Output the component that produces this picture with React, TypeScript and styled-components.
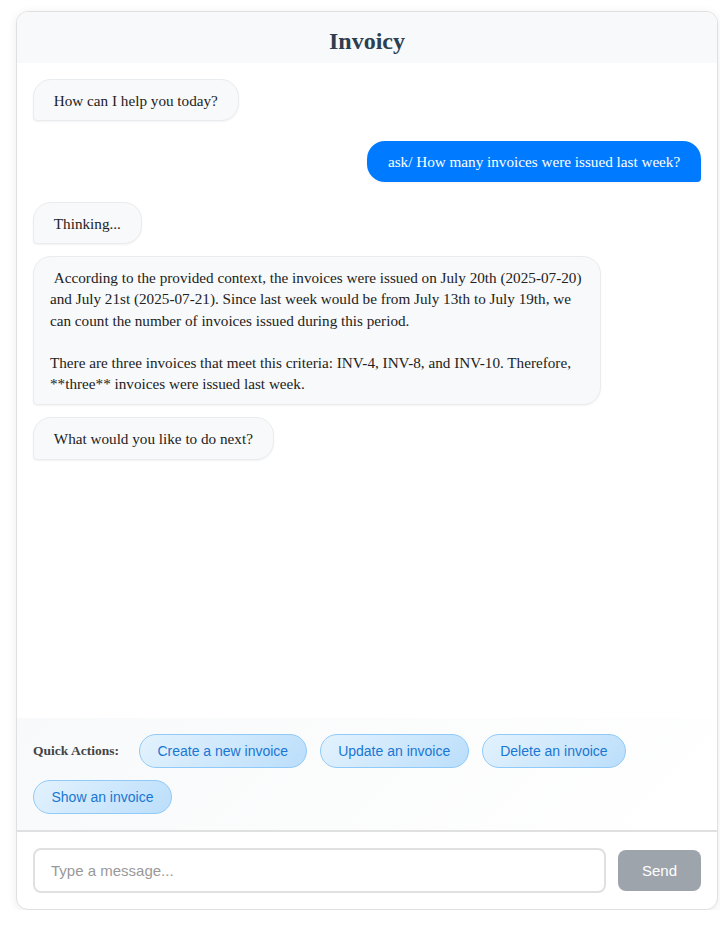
import styled, { createGlobalStyle } from "styled-components";

// ─── Data ─────────────────────────────────────────────────────────────────────

type Message = { id: number; from: "bot" | "user"; text: string };

const MESSAGES: Message[] = [
  { id: 1, from: "bot", text: " How can I help you today? " },
  { id: 2, from: "user", text: " ask/ How many invoices were issued last week? " },
  { id: 3, from: "bot", text: " Thinking... " },
  {
    id: 4,
    from: "bot",
    text:
      " According to the provided context, the invoices were issued on July 20th (2025-07-20) and July 21st (2025-07-21). Since last week would be from July 13th to July 19th, we can count the number of invoices issued during this period.\n\nThere are three invoices that meet this criteria: INV-4, INV-8, and INV-10. Therefore, **three** invoices were issued last week.",
  },
  { id: 5, from: "bot", text: " What would you like to do next? " },
];

const QUICK_ACTIONS = [
  "Create a new invoice",
  "Update an invoice",
  "Delete an invoice",
  "Show an invoice",
];

// ─── Styled ───────────────────────────────────────────────────────────────────

const GlobalStyle = createGlobalStyle`
  * { box-sizing: border-box; }
  body { margin: 0; background: #fff; font-family: "Liberation Serif", "Times New Roman", serif; }
`;

const Page = styled.div`
  padding: 11px 2px 0 16px;
`;

const Card = styled.div`
  height: 899px;
  display: flex;
  flex-direction: column;
  background: #fff;
  border: 1px solid #e0e0e0;
  border-radius: 12px;
  box-shadow: 0 2px 10px rgba(0, 0, 0, 0.08);
  overflow: hidden;
`;

const Header = styled.header`
  background: #f8f9fa;
  padding: 16px 0 8px;
  text-align: center;
`;

const Title = styled.h1`
  margin: 0;
  font-size: 24px;
  line-height: 27px;
  font-weight: 700;
  color: #2c3e50;
`;

const MessageList = styled.div`
  flex: 1;
  padding: 16px;
  display: flex;
  flex-direction: column;
  gap: 12px;
  overflow-y: auto;
`;

const Row = styled.div<{ $user: boolean }>`
  display: flex;
  justify-content: ${({ $user }) => ($user ? "flex-end" : "flex-start")};
  margin: ${({ $user }) => ($user ? "8px 0" : "0")};
`;

const Bubble = styled.div<{ $user: boolean }>`
  max-width: 85%;
  padding: ${({ $user }) => ($user ? "9.6px 17px" : "9.6px 16px")};
  font-size: 15.2px;
  line-height: 1.4;
  white-space: pre-wrap;
  border-radius: ${({ $user }) => ($user ? "18px 18px 4px 18px" : "18px 18px 18px 4px")};
  background: ${({ $user }) => ($user ? "#007bff" : "#f8f9fa")};
  color: ${({ $user }) => ($user ? "#fff" : "#222")};
  border: ${({ $user }) => ($user ? "none" : "1px solid #e9ecef")};
  box-shadow: 0 1px 2px rgba(0, 0, 0, 0.05);
`;

const QuickBar = styled.div`
  display: flex;
  flex-wrap: wrap;
  align-items: center;
  column-gap: 13px;
  row-gap: 12px;
  padding: 16px;
  background: linear-gradient(135deg, #f8f9fa 0%, #ffffff 100%);
`;

const QuickLabel = styled.span`
  font-size: 13.5px;
  font-weight: 700;
  color: #444;
  margin-right: 7px;
`;

const Chip = styled.button`
  font-family: "Liberation Sans", Arial, sans-serif;
  font-size: 14px;
  line-height: 16px;
  padding: 8px 17.5px;
  border-radius: 20px;
  border: 1px solid #90caf9;
  background: linear-gradient(135deg, #e3f2fd 0%, #bbdefb 100%);
  color: #1976d2;
  cursor: pointer;
`;

const InputBar = styled.div`
  display: flex;
  align-items: center;
  gap: 12px;
  padding: 16px;
  border-top: 2px solid #e0e0e0;
`;

const TextInput = styled.input`
  flex: 1;
  height: 45px;
  padding: 12px 16px;
  font-family: "Liberation Sans", Arial, sans-serif;
  font-size: 15px;
  color: #333;
  border: 2px solid #e0e0e0;
  border-radius: 8px;
  outline: none;
  &::placeholder { color: #999; }
`;

const SendButton = styled.button`
  padding: 12px 24px;
  font-family: "Liberation Sans", Arial, sans-serif;
  font-size: 15px;
  line-height: 17px;
  color: #fff;
  background: #9ea4ab;
  border: none;
  border-radius: 8px;
`;

// ─── Component ────────────────────────────────────────────────────────────────

export default function App() {
  return (
    <Page>
      <GlobalStyle />
      <Card>
        <Header>
          <Title>Invoicy</Title>
        </Header>

        <MessageList>
          {MESSAGES.map((m) => (
            <Row key={m.id} $user={m.from === "user"}>
              <Bubble $user={m.from === "user"}>{m.text}</Bubble>
            </Row>
          ))}
        </MessageList>

        <QuickBar>
          <QuickLabel>Quick Actions:</QuickLabel>
          {QUICK_ACTIONS.map((a) => (
            <Chip key={a}>{a}</Chip>
          ))}
        </QuickBar>

        <InputBar>
          <TextInput placeholder="Type a message..." />
          <SendButton disabled>Send</SendButton>
        </InputBar>
      </Card>
    </Page>
  );
}
